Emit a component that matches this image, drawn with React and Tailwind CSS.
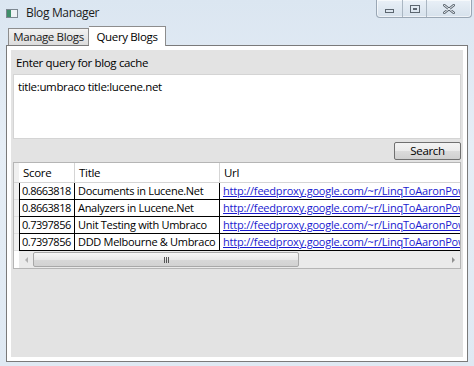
import React from 'react';

const rows = [
  { score: '0.8663818', title: 'Documents in Lucene.Net' },
  { score: '0.8663818', title: 'Analyzers in Lucene.Net' },
  { score: '0.7397856', title: 'Unit Testing with Umbraco' },
  { score: '0.7397856', title: 'DDD Melbourne & Umbraco' },
];

const url = 'http://feedproxy.google.com/~r/LinqToAaronPow';

const App = () => {
  return (
    <div className="w-[474px] h-[366px] overflow-hidden flex flex-col bg-[linear-gradient(180deg,#dbe6f1_0%,#e6eef6_40%,#dfe9f3_100%)] text-[11.5px] text-black font-['Open_Sans','Noto_Sans',sans-serif] tracking-[-0.35px]">
      {/* Title bar */}
      <div className="h-[26px] flex items-start justify-between">
        <div className="flex items-center h-[26px] pl-[6px] gap-[8px]">
          <div className="w-[12px] h-[9px] border border-[#7d8790] bg-[#eef1f4] flex">
            <div className="w-[4px] h-full bg-[#3f8f6a]"></div>
          </div>
          <span className="text-[12px] text-[#1b1b1b] pb-[1px]">Blog Manager</span>
        </div>
        <div className="flex h-[18px] mr-[2px] border border-t-0 border-[#9aa7b5] rounded-b-[4px] bg-[linear-gradient(180deg,#e9f0f7,#d6e1ec)] shadow-[inset_0_0_0_1px_rgba(255,255,255,0.6)]">
          <div className="w-[26px] flex items-center justify-center border-r border-[#aab6c2]">
            <div className="w-[9px] h-[4px] border border-[#5c6670] mt-[4px]"></div>
          </div>
          <div className="w-[24px] flex items-center justify-center border-r border-[#aab6c2]">
            <div className="w-[10px] h-[8px] border border-[#5c6670] flex items-center justify-center">
              <div className="w-[4px] h-[2px] border border-[#5c6670]"></div>
            </div>
          </div>
          <div className="w-[44px] flex items-center justify-center">
            <svg width="12" height="10" viewBox="0 0 12 10">
              <path d="M1 1 L11 9 M11 1 L1 9" stroke="#5c6670" strokeWidth="2.6" strokeLinecap="round" />
              <path d="M1 1 L11 9 M11 1 L1 9" stroke="#eef3f8" strokeWidth="1" strokeLinecap="round" />
            </svg>
          </div>
        </div>
      </div>

      {/* Client area */}
      <div className="flex-1 flex flex-col px-[6px] pb-[4px]">
        <div className="h-[19px] flex items-end">
          <div className="ml-[2px] h-[17px] w-[81px] flex items-center justify-center border border-b-0 border-[#8d8d8d] bg-[linear-gradient(180deg,#f2f2f2,#dcdcdc)] text-[#1a1a1a]">
            Manage Blogs
          </div>
          <div className="h-[20px] w-[77px] flex items-center justify-center border border-b-0 border-l-0 border-[#8d8d8d] bg-white relative top-[1px]">
            Query Blogs
          </div>
        </div>
        <div className="flex-1 border border-[#7a7a7a] bg-white p-[4px] flex flex-col">
          <div className="flex-1 bg-[#e3e3e3] flex flex-col px-[2px]">
            <div className="h-[24px] flex items-center pl-[3px] pt-[2px]">Enter query for blog cache</div>
            <div className="h-[65px] bg-white border border-[#d4d4d4] px-[4px] pt-[3px]">
              title:umbraco title:lucene.net
            </div>
            <div className="flex justify-end mt-[3px]">
              <button className="w-[67px] h-[18px] border border-[#707070] rounded-[2px] bg-[linear-gradient(180deg,#f3f3f3_0%,#ebebeb_50%,#dcdcdc_50%,#d0d0d0_100%)] text-[11.5px] leading-none">
                Search
              </button>
            </div>
            {/* Grid */}
            <div className="mt-[2px] h-[107px] bg-white border border-[#b5b5b5] flex flex-col overflow-hidden text-[11px] tracking-[-0.3px]">
              <div className="flex h-[21px] items-center border-b border-[#d5d5d5] text-[11.5px]">
                <div className="w-[5px] h-full bg-[#f0f0f0]"></div>
                <div className="w-[56px] pl-[4px] border-r border-[#d5d5d5] h-full flex items-center">Score</div>
                <div className="w-[145px] pl-[4px] border-r border-[#d5d5d5] h-full flex items-center">Title</div>
                <div className="flex-1 pl-[4px] h-full flex items-center">Url</div>
              </div>
              {rows.map((r, i) => (
                <div key={i} className="flex h-[17px] items-stretch">
                  <div className="w-[5px] bg-[#f0f0f0] border-b border-[#e0e0e0]"></div>
                  <div className="w-[56px] pl-[2px] border-l border-b border-r border-black flex items-center whitespace-nowrap overflow-hidden tracking-[-0.5px]">{r.score}</div>
                  <div className="w-[145px] pl-[3px] border-b border-r border-black flex items-center whitespace-nowrap overflow-hidden">{r.title}</div>
                  <div className="flex-1 min-w-0 pl-[3px] border-b border-black flex items-center whitespace-nowrap overflow-hidden tracking-[-0.2px]">
                    <span className="text-[#1a1ad0] underline decoration-[#1a1ad0]">{url}</span>
                  </div>
                </div>
              ))}
              {/* Horizontal scrollbar */}
              <div className="h-[17px] flex items-center bg-[#eaeaea] ml-[5px]">
                <div className="w-[14px] flex items-center justify-center">
                  <div className="w-0 h-0 border-y-[3px] border-y-transparent border-r-[3px] border-r-[#b0b0b0]"></div>
                </div>
                <div className="w-[266px] h-[15px] border border-[#a8a8a8] rounded-[2px] bg-[linear-gradient(180deg,#f6f6f6_0%,#e8e8e8_50%,#d8d8d8_51%,#d2d2d2_100%)] flex items-center justify-center">
                  <div className="flex gap-[1px]">
                    <div className="w-[1px] h-[6px] bg-[#555]"></div>
                    <div className="w-[1px] h-[6px] bg-[#555]"></div>
                    <div className="w-[1px] h-[6px] bg-[#555]"></div>
                  </div>
                </div>
                <div className="flex-1"></div>
                <div className="w-[14px] flex items-center justify-center">
                  <div className="w-0 h-0 border-y-[3px] border-y-transparent border-l-[3px] border-l-[#909090]"></div>
                </div>
              </div>
            </div>
            <div className="flex-1"></div>
          </div>
        </div>
      </div>
    </div>
  );
};

export default App;
